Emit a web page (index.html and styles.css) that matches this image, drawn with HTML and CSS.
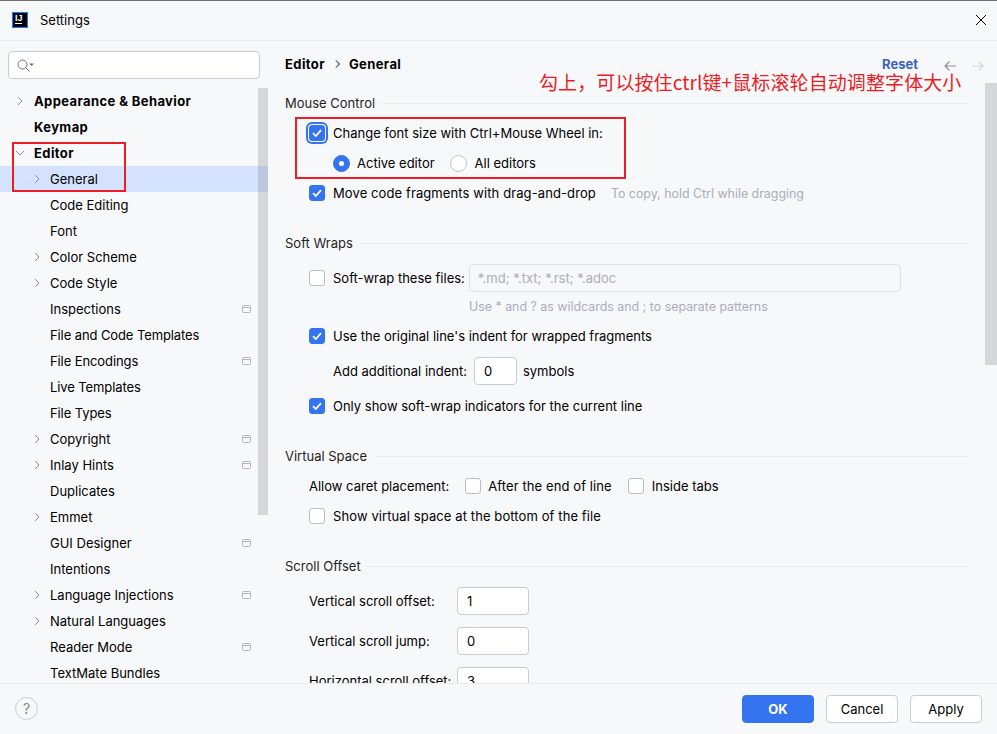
FILE: index.html
```html
<!DOCTYPE html>
<html lang="en">
<head>
<meta charset="utf-8">
<title>Settings</title>
<link rel="stylesheet" href="styles.css">
</head>
<body>
<div class="window">
  <header class="titlebar">
    <div class="appicon"><span class="appicon-text">IJ</span><span class="appicon-bar"></span></div>
    <span class="title">Settings</span>
    <svg class="close" width="10" height="10" viewBox="0 0 10 10"><path d="M0 0l10 10M10 0L0 10" stroke="#000" stroke-width="1" fill="none"/></svg>
  </header>
  <div class="middle">
    <aside class="sidebar">
      <div class="search">
        <svg width="20" height="16" viewBox="0 0 20 16"><circle cx="5.500" cy="7.500" r="4.500" fill="none" stroke="#6c707e" stroke-width="1"/><path d="M9 11l3.500 3.500" stroke="#6c707e" fill="none"/><path d="M12 6.500h5L14.500 9z" fill="#6c707e"/></svg>
      </div>
      <nav class="tree">
        <div class="node top"><svg class="arrow" width="10" height="10" viewBox="0 0 10 10"><path d="M3 1l4 4-4 4" fill="none" stroke="#8c8f99"/></svg><b>Appearance &amp; Behavior</b></div>
        <div class="node top"><span class="arrow"></span><b>Keymap</b></div>
        <div class="node top"><svg class="arrow" width="10" height="10" viewBox="0 0 10 10"><path d="M1 3l4 4 4-4" fill="none" stroke="#8c8f99"/></svg><b>Editor</b></div>
        <div class="node sub selected"><svg class="arrow" width="10" height="10" viewBox="0 0 10 10"><path d="M3 1l4 4-4 4" fill="none" stroke="#8c8f99"/></svg>General</div>
        <div class="node sub"><span class="arrow"></span>Code Editing</div>
        <div class="node sub"><span class="arrow"></span>Font</div>
        <div class="node sub"><svg class="arrow" width="10" height="10" viewBox="0 0 10 10"><path d="M3 1l4 4-4 4" fill="none" stroke="#8c8f99"/></svg>Color Scheme</div>
        <div class="node sub"><svg class="arrow" width="10" height="10" viewBox="0 0 10 10"><path d="M3 1l4 4-4 4" fill="none" stroke="#8c8f99"/></svg>Code Style</div>
        <div class="node sub"><span class="arrow"></span>Inspections<span class="scope"></span></div>
        <div class="node sub"><span class="arrow"></span><span class="snug">File and Code Templates</span></div>
        <div class="node sub"><span class="arrow"></span><span class="snug">File Encodings</span><span class="scope"></span></div>
        <div class="node sub"><span class="arrow"></span><span class="snug">Live Templates</span></div>
        <div class="node sub"><span class="arrow"></span><span class="snug">File Types</span></div>
        <div class="node sub"><svg class="arrow" width="10" height="10" viewBox="0 0 10 10"><path d="M3 1l4 4-4 4" fill="none" stroke="#8c8f99"/></svg>Copyright<span class="scope"></span></div>
        <div class="node sub"><svg class="arrow" width="10" height="10" viewBox="0 0 10 10"><path d="M3 1l4 4-4 4" fill="none" stroke="#8c8f99"/></svg>Inlay Hints<span class="scope"></span></div>
        <div class="node sub"><span class="arrow"></span>Duplicates</div>
        <div class="node sub"><svg class="arrow" width="10" height="10" viewBox="0 0 10 10"><path d="M3 1l4 4-4 4" fill="none" stroke="#8c8f99"/></svg>Emmet</div>
        <div class="node sub"><span class="arrow"></span>GUI Designer<span class="scope"></span></div>
        <div class="node sub"><span class="arrow"></span>Intentions</div>
        <div class="node sub"><svg class="arrow" width="10" height="10" viewBox="0 0 10 10"><path d="M3 1l4 4-4 4" fill="none" stroke="#8c8f99"/></svg>Language Injections<span class="scope"></span></div>
        <div class="node sub"><svg class="arrow" width="10" height="10" viewBox="0 0 10 10"><path d="M3 1l4 4-4 4" fill="none" stroke="#8c8f99"/></svg>Natural Languages</div>
        <div class="node sub"><span class="arrow"></span>Reader Mode<span class="scope"></span></div>
        <div class="node sub"><span class="arrow"></span>TextMate Bundles</div>
      </nav>
      <div class="thumb thumb-left"></div>
      <div class="redbox redbox-tree"></div>
    </aside>
    <main class="main">
      <div class="crumbs">
        <b>Editor</b>
        <svg class="crumb-sep" width="8" height="10" viewBox="0 0 8 10"><path d="M2 1.500l3.500 3.500L2 8.500" fill="none" stroke="#000"/></svg>
        <b>General</b>
        <b class="reset">Reset</b>
        <svg class="nav-arrow" width="14" height="12" viewBox="0 0 14 12"><path d="M13 6H2M6.500 1.500L2 6l4.500 4.500" fill="none" stroke="#8c8f99" stroke-width="1.200"/></svg>
        <svg class="nav-arrow next" width="14" height="12" viewBox="0 0 14 12"><path d="M1 6h11M7.500 1.500L12 6l-4.500 4.500" fill="none" stroke="#d3d5db" stroke-width="1.200"/></svg>
      </div>

      <section class="group first">
        <div class="group-title"><span>Mouse Control</span><i></i></div>
        <div class="row gap-s">
          <span class="check on focus"><svg width="12" height="12" viewBox="0 0 12 12"><path d="M2 6.200l2.800 2.800L10 3.200" fill="none" stroke="#fff" stroke-width="1.800"/></svg></span>
          Change font size with Ctrl+Mouse Wheel in:
        </div>
        <div class="row indent">
          <span class="radio on"></span><span class="radio-label">Active editor</span>
          <span class="radio"></span><span>All editors</span>
        </div>
        <div class="row">
          <span class="check on"><svg width="12" height="12" viewBox="0 0 12 12"><path d="M2 6.200l2.800 2.800L10 3.200" fill="none" stroke="#fff" stroke-width="1.800"/></svg></span>
          <span class="loose">Move code fragments with drag-and-drop</span>
          <span class="hint after">To copy, hold Ctrl while dragging</span>
        </div>
      </section>

      <section class="group">
        <div class="group-title"><span>Soft Wraps</span><i></i></div>
        <div class="row field-row gap-l">
          <span class="check"></span>
          Soft-wrap these files:
          <span class="input wide disabled">*.md; *.txt; *.rst; *.adoc</span>
        </div>
        <div class="hint hint-row">Use * and ? as wildcards and ; to separate patterns</div>
        <div class="row gap-s">
          <span class="check on"><svg width="12" height="12" viewBox="0 0 12 12"><path d="M2 6.200l2.800 2.800L10 3.200" fill="none" stroke="#fff" stroke-width="1.800"/></svg></span>
          Use the original line's indent for wrapped fragments
        </div>
        <div class="row field-row indent gap-m">
          Add additional indent:
          <span class="input tiny">0</span>
          symbols
        </div>
        <div class="row gap-m">
          <span class="check on"><svg width="12" height="12" viewBox="0 0 12 12"><path d="M2 6.200l2.800 2.800L10 3.200" fill="none" stroke="#fff" stroke-width="1.800"/></svg></span>
          Only show soft-wrap indicators for the current line
        </div>
      </section>

      <section class="group">
        <div class="group-title"><span>Virtual Space</span><i></i></div>
        <div class="row gap-s">
          <span class="caret-label">Allow caret placement:</span>
          <span class="check tight"></span><span class="caret-option loose">After the end of line</span>
          <span class="check"></span>Inside tabs
        </div>
        <div class="row">
          <span class="check"></span>
          <span class="loose">Show virtual space at the bottom of the file</span>
        </div>
      </section>

      <section class="group">
        <div class="group-title"><span>Scroll Offset</span><i></i></div>
        <div class="row field-row gap-l"><span class="offset-label">Vertical scroll offset:</span><span class="input small">1</span></div>
        <div class="row field-row gap-f"><span class="offset-label">Vertical scroll jump:</span><span class="input small">0</span></div>
        <div class="row field-row gap-f"><span class="offset-label">Horizontal scroll offset:</span><span class="input small">3</span></div>
      </section>

      <div class="thumb thumb-right"></div>
      <div class="redbox redbox-main"></div>
      <div class="note">勾上，可以按住ctrl键+鼠标滚轮自动调整字体大小</div>
    </main>
  </div>
  <footer class="footer">
    <span class="help">?</span>
    <button class="btn primary">OK</button>
    <button class="btn">Cancel</button>
    <button class="btn">Apply</button>
  </footer>
</div>
</body>
</html>
```

FILE: styles.css
```css
* { box-sizing: border-box; }
html, body { margin: 0; padding: 0; }
body {
  width: 997px;
  height: 734px;
  overflow: hidden;
  background: #f7f8fa;
  color: #000;
  font: 13px/18px Inter, "Noto Sans", sans-serif;
}
.window { display: flex; flex-direction: column; height: 734px; }

.titlebar {
  display: flex;
  align-items: center;
  height: 41px;
  padding: 0 11px 1px 12px;
  border-top: 1px solid #6e6e6e;
  border-bottom: 1px solid #ebecf0;
  flex: none;
}
.appicon {
  position: relative;
  width: 16px;
  height: 16px;
  background: #000;
  border: 1px solid #087cfa;
  margin-right: 12px;
}
.appicon-text {
  position: absolute;
  left: 2px;
  top: 1px;
  color: #fff;
  font: bold 9px/8px "Liberation Sans", sans-serif;
}
.appicon-bar { position: absolute; left: 2px; top: 10px; width: 7px; height: 1px; background: #fff; }
.title { flex: 1; }

.middle { display: flex; flex: 1; min-height: 0; }

.sidebar {
  position: relative;
  width: 268px;
  flex: none;
  overflow: hidden;
  padding-top: 10px;
}
.search {
  display: flex;
  align-items: center;
  width: 252px;
  height: 28px;
  margin-left: 8px;
  padding-left: 8px;
  background: #fff;
  border: 1px solid #c9ccd6;
  border-radius: 4px;
}
.tree { margin-top: 9px; }
.node { display: flex; align-items: center; height: 26px; padding-right: 17px; white-space: nowrap; }
.node b { font-weight: 700; letter-spacing: 0.4px; }
.top { padding-left: 15px; }
.sub { padding-left: 32px; }
.arrow { flex: none; width: 10px; height: 10px; margin-right: 8px; }
.top .arrow { margin-right: 9px; }
.selected { background: #d4e2ff; }
.snug { letter-spacing: -0.1px; }
.scope {
  position: relative;
  width: 9px;
  height: 8px;
  margin-left: auto;
  border: 1px solid #b0b4c4;
  border-radius: 1.500px;
}
.scope::after {
  content: "";
  position: absolute;
  left: 0;
  right: 0;
  top: 1px;
  height: 1px;
  background: #b0b4c4;
}

.thumb { position: absolute; background: rgba(115, 115, 120, 0.25); }
.thumb-left { left: 258px; top: 47px; width: 10px; height: 427px; }
.thumb-right { right: 0; top: 42px; width: 12px; height: 282px; }

.redbox { position: absolute; border: 2px solid #ed1c24; }
.redbox-tree { left: 12px; top: 101px; width: 114px; height: 50px; }
.redbox-main { left: 27px; top: 76px; width: 331px; height: 62px; }
.note {
  position: absolute;
  left: 271px;
  top: 27px;
  color: #ed1c24;
  font: 19px/28px "Noto Sans CJK SC", sans-serif;
  letter-spacing: 0.1px;
  white-space: nowrap;
}

.main {
  position: relative;
  flex: 1;
  overflow: hidden;
  padding: 0 29px 0 17px;
}
.crumbs { display: flex; align-items: center; height: 46px; }
.crumbs b { font-weight: 700; letter-spacing: 0.4px; }
.crumb-sep { margin: 0 7px 0 9px; }
.crumbs .reset { margin-left: auto; margin-right: 25px; color: #3a63b8; letter-spacing: 0; }
.nav-arrow { margin-right: 11px; margin-top: 4px; }
.nav-arrow.next { position: absolute; left: 703px; margin: 4px 0 0; }

.group { margin-top: 25px; }
.group.first { margin-top: 6px; }
.group-title { display: flex; align-items: center; gap: 6px; height: 20px; color: #1f1f1f; }
.group-title i { flex: 1; height: 1px; background: #ebecf0; }

.row { display: flex; align-items: center; height: 30px; padding-left: 24px; white-space: nowrap; }
.gap-s { margin-top: 5px; }
.gap-m { margin-top: 6px; }
.gap-l { margin-top: 11px; }
.gap-f { margin-top: 12px; }
.field-row { height: 28px; }
.indent { padding-left: 48px; }
.loose { letter-spacing: 0.1px; }

.check {
  flex: none;
  position: relative;
  display: flex;
  align-items: center;
  justify-content: center;
  width: 16px;
  height: 16px;
  margin-right: 8px;
  background: #fff;
  border: 1px solid #b9bdc9;
  border-radius: 3px;
}
.check.tight { margin-right: 7px; }
.check.on { background: #3574f0; border-color: #3574f0; }
.check.focus { box-shadow: 0 0 0 1px #f7f8fa, 0 0 0 3px #3574f0; border-radius: 3px; }

.radio {
  flex: none;
  position: relative;
  width: 17px;
  height: 17px;
  margin-right: 7px;
  background: #fff;
  border: 1px solid #c0c3ce;
  border-radius: 50%;
}
.radio.on { background: #3574f0; border-color: #3574f0; }
.radio.on::after {
  content: "";
  position: absolute;
  left: 5px;
  top: 5px;
  width: 5px;
  height: 5px;
  background: #fff;
  border-radius: 50%;
}
.radio-label { margin-right: 15px; }
.radio-label + .radio { margin-right: 8px; }

.hint { color: #a8adbd; font-size: 12.400px; }
.hint.after { margin: 1px 0 0 15px; }
.hint-row { height: 18px; margin-top: 6px; padding-left: 184px; }

.input {
  display: flex;
  align-items: center;
  flex: none;
  height: 28px;
  padding-left: 9px;
  background: #fff;
  border: 1px solid #c9ccd6;
  border-radius: 4px;
}
.input.wide { width: 432px; margin-left: 4px; padding-left: 8px; }
.input.disabled { background: #f7f8fa; border-color: #e0e2e8; color: #a8adbd; }
.input.tiny { width: 43px; margin: 0 6px 0 7px; }
.input.small { width: 72px; }
.offset-label { width: 148px; }

.caret-label { margin-right: 16px; }
.caret-option { margin-right: 16px; }

.footer {
  display: flex;
  align-items: flex-start;
  gap: 12px;
  height: 51px;
  flex: none;
  padding: 11px 15px 0 15px;
  border-top: 1px solid #ebecf0;
}
.help {
  width: 23px;
  height: 23px;
  margin-top: 2px;
  margin-right: auto;
  border: 1px solid #c9ccd6;
  border-radius: 50%;
  color: #818594;
  font-size: 14px;
  line-height: 21px;
  text-align: center;
}
.btn {
  width: 72px;
  height: 28px;
  padding: 0;
  background: #fff;
  border: 1px solid #c9ccd6;
  border-radius: 4px;
  color: #000;
  font: 13px/18px Inter, "Noto Sans", sans-serif;
}
.btn.primary {
  background: #3574f0;
  border-color: #3574f0;
  color: #fff;
  font-weight: 700;
}
```
